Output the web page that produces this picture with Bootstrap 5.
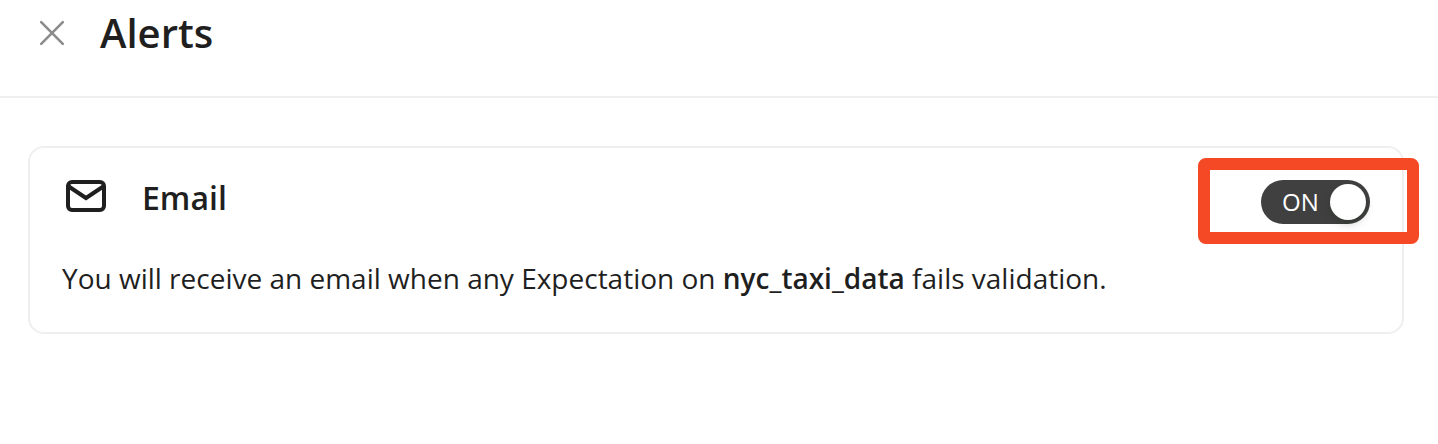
<!DOCTYPE html>
<html lang="en">
<head>
<meta charset="utf-8">
<meta name="viewport" content="width=device-width, initial-scale=1">
<title>Alerts</title>
<link href="https://cdn.jsdelivr.net/npm/bootstrap@5.3.0/dist/css/bootstrap.min.css" rel="stylesheet">
<style>
body{font-family:"Open Sans",sans-serif;color:#1f1f1f;background:#fff;overflow:hidden}
.drawer-head{height:98px;border-bottom:2px solid #efefef;padding:0 38px}
.drawer-title{font-size:40px;font-weight:600;line-height:66px;margin-left:34px}
.close-btn{margin-top:19px;width:28px;height:28px}
.alert-card{margin:48px 34px 0 28px;height:188px;border:2px solid #efefef;border-radius:16px;padding:0 32px}
.mail-icon{margin:30px 0 0 2px}
.method{font-size:32px;font-weight:600;line-height:44px;margin:28px 0 0 34px}
.note{font-size:28px;line-height:44px;margin-top:36px;white-space:nowrap}
.note b{font-weight:600}
.highlight{top:10px;right:-17px;width:221px;height:86px;border:12px solid #f54824;border-radius:8px}
.switch{top:32px;right:32px;width:109px;height:44px;border-radius:22px;background:#404040;color:#fff;font-size:24px;padding:0 4px 0 21px}
.knob{width:36px;height:36px;background:#fff;box-shadow:0 4px 8px rgba(0,35,11,.2)}
</style>
</head>
<body>
<header class="drawer-head d-flex align-items-start">
<button class="close-btn btn p-0 border-0 d-flex" aria-label="Close"><svg width="28" height="28" viewBox="0 0 28 28" fill="none" stroke="#8c8c8c" stroke-width="2.6" stroke-linecap="round"><path d="M3.2 3.2 24.8 24.8M24.8 3.2 3.2 24.8"/></svg></button>
<h1 class="drawer-title mb-0">Alerts</h1>
</header>
<main class="alert-card position-relative">
<div class="d-flex align-items-start">
<svg class="mail-icon" width="44" height="36" viewBox="0 0 44 36" fill="none" stroke="#1f1f1f" stroke-width="4" stroke-linejoin="miter"><rect x="4" y="4" width="36" height="28" rx="4"/><path d="M4 8 22 20 40 8"/></svg>
<h2 class="method mb-0">Email</h2>
</div>
<p class="note mb-0">You will receive an email when any Expectation on <b>nyc_taxi_data</b> fails validation.</p>
<div class="switch position-absolute d-flex align-items-center justify-content-between" role="switch" aria-checked="true"><span>ON</span><span class="knob rounded-circle"></span></div>
<div class="highlight position-absolute"></div>
</main>
<script src="https://cdn.jsdelivr.net/npm/bootstrap@5.3.0/dist/js/bootstrap.bundle.min.js"></script>
</body>
</html>
